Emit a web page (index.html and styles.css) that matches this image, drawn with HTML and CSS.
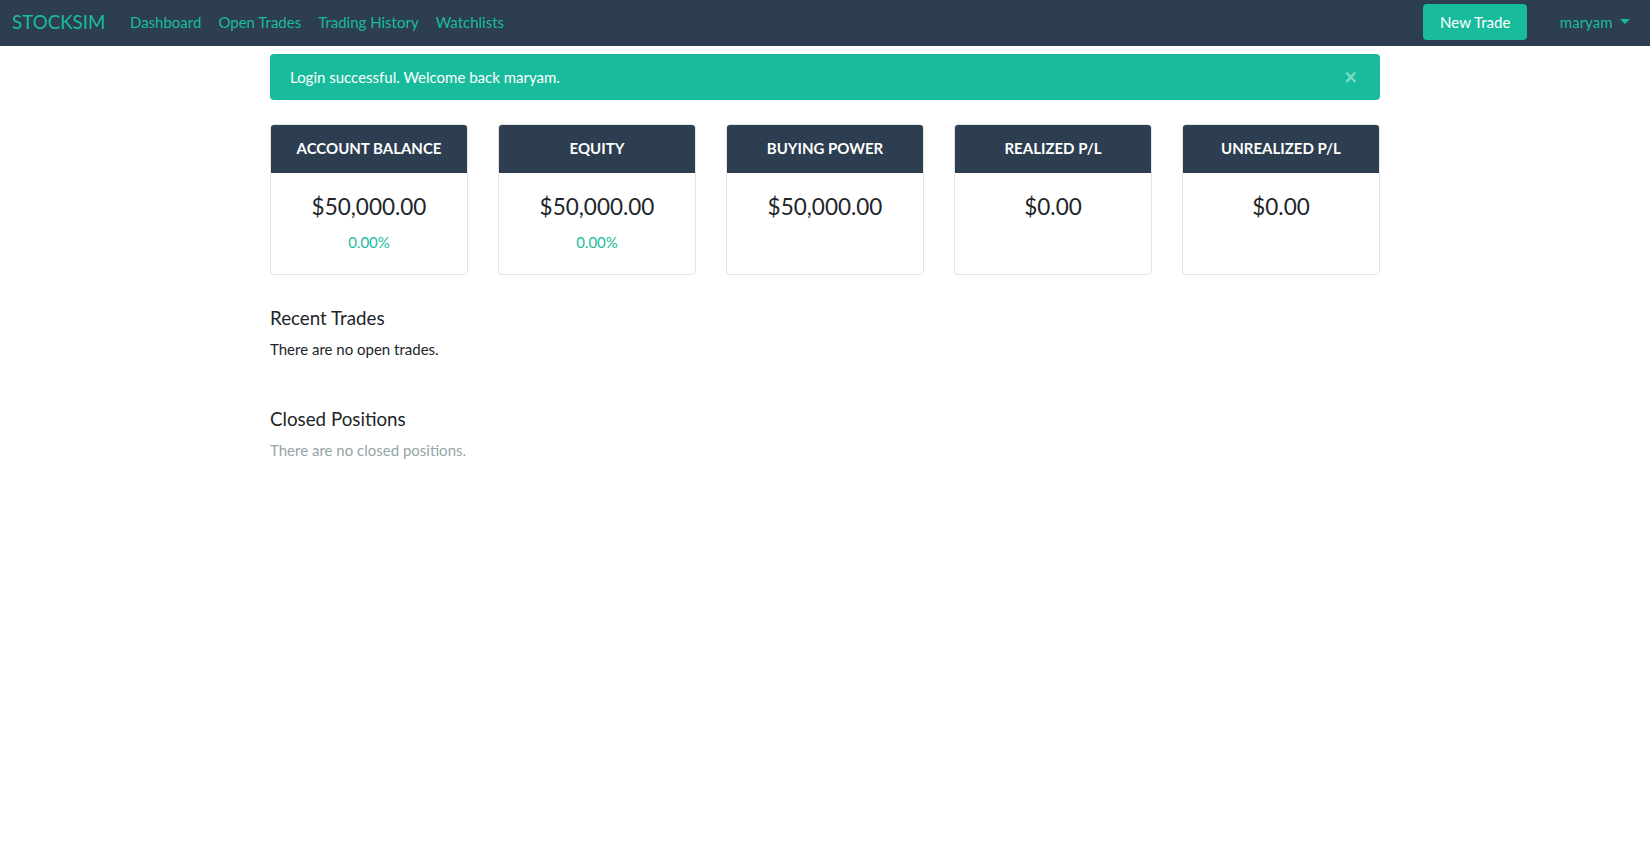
FILE: index.html
```html
<!DOCTYPE html>
<html lang="en">
<head>
<meta charset="utf-8">
<title>StockSim</title>
<link rel="stylesheet" href="styles.css">
</head>
<body>
<nav class="navbar">
  <div class="nav-left">
    <a class="brand" href="#">STOCKSIM</a>
    <a class="nav-link" href="#">Dashboard</a>
    <a class="nav-link" href="#">Open Trades</a>
    <a class="nav-link" href="#">Trading History</a>
    <a class="nav-link" href="#">Watchlists</a>
  </div>
  <div class="nav-right">
    <a class="btn-new" href="#">New Trade</a>
    <a class="nav-link user" href="#">maryam<span class="caret"></span></a>
  </div>
</nav>
<main class="container">
  <div class="alert">
    <span>Login successful. Welcome back maryam.</span>
    <span class="close">&times;</span>
  </div>
  <div class="cards">
    <div class="card">
      <div class="card-header">ACCOUNT BALANCE</div>
      <div class="card-body"><div class="value">$50,000.00</div><div class="pct">0.00%</div></div>
    </div>
    <div class="card">
      <div class="card-header">EQUITY</div>
      <div class="card-body"><div class="value">$50,000.00</div><div class="pct">0.00%</div></div>
    </div>
    <div class="card">
      <div class="card-header">BUYING POWER</div>
      <div class="card-body"><div class="value">$50,000.00</div></div>
    </div>
    <div class="card">
      <div class="card-header">REALIZED P/L</div>
      <div class="card-body"><div class="value">$0.00</div></div>
    </div>
    <div class="card">
      <div class="card-header">UNREALIZED P/L</div>
      <div class="card-body"><div class="value">$0.00</div></div>
    </div>
  </div>
  <section class="section first">
    <h5 class="section-title">Recent Trades</h5>
    <p class="section-text">There are no open trades.</p>
  </section>
  <section class="section">
    <h5 class="section-title">Closed Positions</h5>
    <p class="section-text muted">There are no closed positions.</p>
  </section>
</main>
</body>
</html>
```

FILE: styles.css
```css
* { box-sizing: border-box; }
body {
  margin: 0;
  font-family: Lato, "Noto Sans", sans-serif;
  font-size: 15px;
  line-height: 1.5;
  color: #212529;
  background: #fff;
}
a { text-decoration: none; }
.navbar {
  background: #2c3e50;
  height: 46px;
  display: flex;
  align-items: center;
  justify-content: space-between;
  padding: 0 12px 2px;
}
.nav-left, .nav-right { display: flex; align-items: center; }
.brand {
  color: #18bc9c;
  font-size: 18.75px;
  line-height: 1.2;
  margin-right: 16px;
}
.nav-link {
  color: #18bc9c;
  font-size: 15px;
  padding: 0 8.5px;
  line-height: 22px;
}
.btn-new {
  background: #18bc9c;
  color: #fff;
  border-radius: 4px;
  height: 36px;
  line-height: 36px;
  padding: 0 17px;
  font-size: 15px;
  margin-right: 24px;
}
.user { display: flex; align-items: center; }
.caret {
  display: inline-block;
  margin-left: 7px;
  width: 0; height: 0;
  border-top: 5px solid #18bc9c;
  border-left: 5px solid transparent;
  border-right: 5px solid transparent;
  margin-top: -2px;
}
.container {
  width: 1110px;
  margin: 0 auto;
}
.alert {
  margin: 8px 0 24px;
  background: #18bc9c;
  color: #fff;
  border-radius: 4px;
  padding: 12px 20px;
  display: flex;
  justify-content: space-between;
  align-items: center;
  height: 46px;
}
.close {
  color: #fff;
  opacity: .45;
  font-weight: 700;
  font-size: 22px;
  line-height: 1;
  margin-right: 3px;
}
.cards {
  display: grid;
  grid-template-columns: repeat(5, 1fr);
  column-gap: 30px;
}
.card {
  border: 1px solid rgba(0,0,0,.1);
  border-radius: 4px;
  overflow: hidden;
  display: flex;
  flex-direction: column;
}
.card-header {
  background: #2c3e50;
  color: #fff;
  font-weight: 700;
  text-align: center;
  padding: 12px 20px;
  height: 48px;
  line-height: 23px;
}
.card-body {
  padding: 20px 20px 19px;
  text-align: center;
  flex: 1;
  min-height: 101px;
}
.value {
  font-size: 22.5px;
  line-height: 1.2;
  margin-bottom: 11px;
}
.pct {
  color: #18bc9c;
  font-size: 15px;
}
.section { margin-top: 47px; }
.section.first { margin-top: 32px; }
.section-title {
  font-size: 18.75px;
  font-weight: 400;
  line-height: 1.2;
  margin: 0 0 8.5px;
}
.section-text {
  margin: 0 0 16px;
}
.muted { color: #95a5a6; }
```
